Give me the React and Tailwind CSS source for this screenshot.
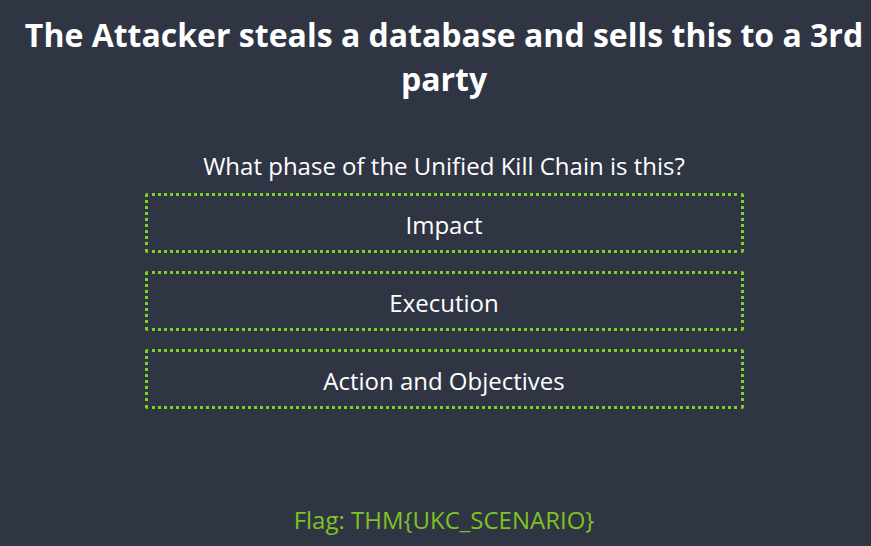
export default function App() {
  const options = ['Impact', 'Execution', 'Action and Objectives'];
  return (
    <div
      className="min-h-[546px] w-full overflow-hidden bg-[#303544] text-white flex"
      style={{ fontFamily: '"Open Sans", "Noto Sans", sans-serif' }}
    >
      <div className="w-[888px] shrink-0 flex flex-col items-center">
        <h1 className="mt-[13px] text-center text-[32px] font-bold leading-[44px]">
          The Attacker steals a database and sells this to a 3rd party
        </h1>

        <p className="mt-[50px] text-[24px] leading-[30px]">What phase of the Unified Kill Chain is this?</p>

        <div className="mt-[12px] w-[599px] flex flex-col gap-[18px]">
          {options.map((o) => (
            <div
              key={o}
              className="h-[60px] pt-[3px] rounded-[3px] border-[3px] border-dotted border-[#7ed321] flex items-center justify-center text-[24px] leading-[30px]"
            >
              {o}
            </div>
          ))}
        </div>

        <p className="mt-[96px] text-[24px] leading-[30px] text-[#7cc424]">Flag: THM{'{'}UKC_SCENARIO{'}'}</p>
      </div>
    </div>
  );
}
